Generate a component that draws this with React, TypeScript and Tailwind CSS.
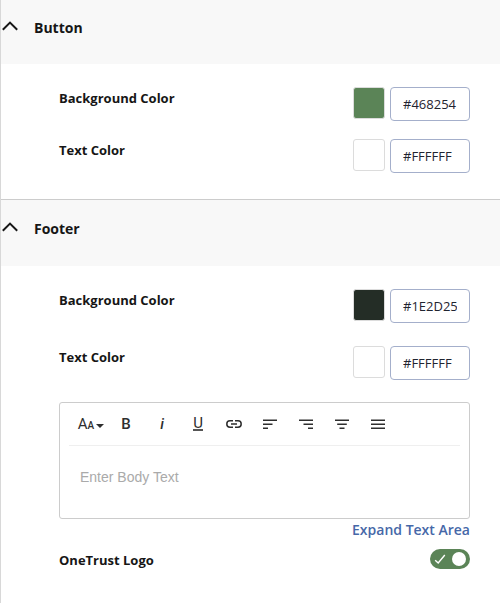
import { useState } from "react";
import type { ReactNode } from "react";

type SectionProps = {
    readonly title: string;
    readonly headerClass: string;
    readonly children: ReactNode;
};

function Section({ title, headerClass, children }: SectionProps) {
    const [open, setOpen] = useState(true);
    return (
        <section>
            <h2>
                <button
                    type="button"
                    aria-expanded={open}
                    onClick={() => setOpen(!open)}
                    className={`flex w-full items-start bg-[#f8f8f8] pl-px text-left ${headerClass}`}
                >
                    <svg className={open ? "mt-[3px] h-2.5 w-4" : "mt-[3px] h-2.5 w-4 rotate-180"} viewBox="0 0 16 10" fill="none" stroke="#161616" strokeWidth="2">
                        <path d="M0.8 8.8 8 1.6l7.2 7.2" />
                    </svg>
                    <span className="ml-4 text-sm leading-5 font-bold">{title}</span>
                </button>
            </h2>
            {open && children}
        </section>
    );
}

type ColorFieldProps = {
    readonly id: string;
    readonly label: string;
    readonly initial: string;
    readonly swatch: string;
};

function ColorField({ id, label, initial, swatch }: ColorFieldProps) {
    const [value, setValue] = useState(initial);
    return (
        <div className="flex items-start">
            <label htmlFor={id} className="flex-1 text-[13px] leading-[22px] font-bold">
                {label}
            </label>
            <button
                type="button"
                aria-label={`Pick ${label}`}
                className={`h-8 w-8 rounded-[3px] border border-[#dcdcdc] ${swatch}`}
            />
            <input
                id={id}
                type="text"
                value={value}
                onChange={e => setValue(e.target.value)}
                className="ml-[5px] h-[34px] w-20 rounded-[4px] border border-[#a4afcb] bg-white px-3 text-[13px] text-[#1f2430] outline-none"
            />
        </div>
    );
}

function ToolButton({ label, children }: { readonly label: string; readonly children: ReactNode }) {
    return (
        <button type="button" aria-label={label} className="flex h-full w-9 items-center justify-center text-[#2e2e2e]">
            {children}
        </button>
    );
}

const alignments = [
    { label: "Align Left", d: "M0 1.2h14M0 5.2h9.5M0 9.2h5" },
    { label: "Align Right", d: "M0 1.2h14M4.5 5.2h9.5M9 9.2h5" },
    { label: "Align Center", d: "M0 1.2h14M2.2 5.2h9.6M4.5 9.2h5" },
    { label: "Align Justify", d: "M0 1.2h14M0 5.2h14M0 9.2h14" },
];

function Editor() {
    return (
        <div className="rounded-[3px] border border-[#cccccc]">
            <div className="mx-[9px] flex h-[43px] border-b border-[#efefef] pl-[3px] font-['Roboto',sans-serif]">
                <ToolButton label="Font Size">
                    <span className="pl-0.5 text-[15px] leading-5">A</span>
                    <span className="pt-1 text-[10px] leading-4 font-medium">A</span>
                    <svg className="mt-1 ml-0.5 h-1 w-2" viewBox="0 0 8 4" fill="currentColor">
                        <path d="M0 0h8L4 4z" />
                    </svg>
                </ToolButton>
                <ToolButton label="Bold">
                    <span className="text-[15px] leading-5 font-medium">B</span>
                </ToolButton>
                <ToolButton label="Italic">
                    <span className="text-[15px] leading-5 font-medium italic">i</span>
                </ToolButton>
                <ToolButton label="Underline">
                    <span className="border-b-2 border-[#555555] text-[15px] leading-3">U</span>
                </ToolButton>
                <ToolButton label="Insert Link">
                    <svg className="h-2 w-4" viewBox="0 0 16 8" fill="none" stroke="currentColor" strokeWidth="1.5">
                        <path d="M7 0.8H4a3.2 3.2 0 0 0 0 6.4h3M9 0.8h3a3.2 3.2 0 0 1 0 6.4H9M5 4h6" />
                    </svg>
                </ToolButton>
                {alignments.map(item => (
                    <ToolButton key={item.label} label={item.label}>
                        <svg className="h-2.5 w-3.5" viewBox="0 0 14 10" fill="none" stroke="currentColor" strokeWidth="1.5">
                            <path d={item.d} />
                        </svg>
                    </ToolButton>
                ))}
            </div>
            <textarea
                aria-label="Body Text"
                placeholder="Enter Body Text"
                className="block h-[72px] w-full resize-none px-5 pt-5 font-['Liberation_Sans',Arial,sans-serif] text-sm leading-[22px] outline-none placeholder:text-[#aaaaaa]"
            />
        </div>
    );
}

function Toggle({ id }: { readonly id: string }) {
    const [on, setOn] = useState(true);
    return (
        <span className="relative flex h-5 w-10">
            <input
                id={id}
                type="checkbox"
                role="switch"
                checked={on}
                onChange={e => setOn(e.target.checked)}
                className="h-5 w-10 cursor-pointer appearance-none rounded-full bg-gray-400 checked:bg-[#5b8457]"
            />
            <span className={`pointer-events-none absolute inset-0 flex items-center justify-between pr-1 pl-1 ${on ? "" : "flex-row-reverse"}`}>
                <svg className="h-3 w-3" viewBox="0 0 12 12" fill="none" stroke="white" strokeWidth="1.4">
                    <path d="M1.2 7.2 4.2 10 10.8 2" />
                </svg>
                <span className="h-3.5 w-3.5 rounded-full bg-white" />
            </span>
        </span>
    );
}

export default function App() {
    return (
        <main className="min-h-screen border-l border-[#d8d8d8] bg-white font-['Open_Sans',sans-serif] text-[#161616]">
            <Section title="Button" headerClass="pt-[18px] pb-[26px]">
                <div className="flex flex-col gap-[18px] border-b border-[#cccccc] pt-[23px] pr-[30px] pb-[26px] pl-[58px]">
                    <ColorField id="button-background" label="Background Color" initial="#468254" swatch="bg-[#5b8457]" />
                    <ColorField id="button-text" label="Text Color" initial="#FFFFFF" swatch="bg-white" />
                </div>
            </Section>
            <Section title="Footer" headerClass="pt-[19px] pb-[27px]">
                <div className="flex flex-col pt-[23px] pr-[30px] pb-8 pl-[58px]">
                    <div className="mb-[22px] flex flex-col gap-[23px]">
                        <ColorField id="footer-background" label="Background Color" initial="#1E2D25" swatch="bg-[#242d26]" />
                        <ColorField id="footer-text" label="Text Color" initial="#FFFFFF" swatch="bg-white" />
                    </div>
                    <Editor />
                    <button type="button" className="self-end text-sm leading-[22px] font-semibold text-[#4668a8]">
                        Expand Text Area
                    </button>
                    <div className="mt-2 flex items-start justify-between">
                        <label htmlFor="onetrust-logo" className="text-[13px] leading-[22px] font-bold">
                            OneTrust Logo
                        </label>
                        <Toggle id="onetrust-logo" />
                    </div>
                </div>
            </Section>
        </main>
    );
}
